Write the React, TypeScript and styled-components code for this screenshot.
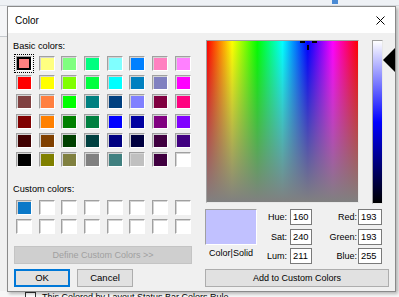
import React from 'react';
import styled, { createGlobalStyle } from 'styled-components';

const GlobalStyle = createGlobalStyle`
  html, body { margin: 0; padding: 0; }
  body {
    width: 399px;
    height: 297px;
    overflow: hidden;
    background: #f0f0f0;
    font-family: 'Liberation Sans', Arial, sans-serif;
  }
  * { box-sizing: border-box; }
`;

const BASIC = [
  '#ff8080', '#ffff80', '#80ff80', '#00ff80', '#80ffff', '#0080ff', '#ff80c0', '#ff80ff',
  '#ff0000', '#ffff00', '#80ff00', '#00ff40', '#00ffff', '#0080c0', '#8080c0', '#ff00ff',
  '#804040', '#ff8040', '#00ff00', '#008080', '#004080', '#8080ff', '#800040', '#ff0080',
  '#800000', '#ff8000', '#008000', '#008040', '#0000ff', '#0000a0', '#800080', '#8000ff',
  '#400000', '#804000', '#004000', '#004040', '#000080', '#000040', '#400040', '#400080',
  '#000000', '#808000', '#808040', '#808080', '#408080', '#c0c0c0', '#400040', '#ffffff',
];

const CUSTOM = ['#0a78c8', ...Array(15).fill('#ffffff')];

const HSL = { hue: 160, sat: 240, lum: 211 };
const RGB = { red: 193, green: 193, blue: 255 };

const SPECTRUM_W = 153;
const BAR_H = 164;

export default function App() {
  const crossX = (HSL.hue / 240) * (SPECTRUM_W - 2);
  const crossY = (1 - HSL.sat / 240) * 161;
  const arrowY = (1 - HSL.lum / 240) * BAR_H;

  return (
    <>
      <GlobalStyle />
      <Desktop>
        <BackTop>
          <BackIcon />
        </BackTop>
        <BackMiddle>
          <BackSide />
        </BackMiddle>
        <BackBottom>
          <CheckBox />
          <BackText>This Colored by Layout Status Bar Colors Rule</BackText>
        </BackBottom>

        <Dialog>
          <TitleBar>
            <Title>Color</Title>
            <CloseIcon width="9" height="9" viewBox="0 0 9 9">
              <path d="M0.5 0.5 L8.5 8.5 M8.5 0.5 L0.5 8.5" stroke="#000" strokeWidth="1" />
            </CloseIcon>
          </TitleBar>

          <Body>
            <LeftPane>
              <Label>Basic colors:</Label>
              <SwatchGrid>
                {BASIC.map((c, i) => (
                  <Swatch key={i} $color={c} $selected={i === 0} />
                ))}
              </SwatchGrid>

              <Label $top={16}>Custom colors:</Label>
              <SwatchGrid $custom>
                {CUSTOM.map((c, i) => (
                  <Swatch key={i} $color={c} />
                ))}
              </SwatchGrid>

              <DefineButton disabled>Define Custom Colors &gt;&gt;</DefineButton>
              <ButtonRow>
                <Button $default>OK</Button>
                <Button>Cancel</Button>
              </ButtonRow>
            </LeftPane>

            <RightPane>
              <PickerRow>
                <Spectrum>
                  <Cross
                    width="17"
                    height="10"
                    viewBox="0 0 17 10"
                    style={{ left: crossX - 8, top: crossY }}
                  >
                    <rect x="0" y="0" width="5" height="2" fill="#000" />
                    <rect x="12" y="0" width="5" height="2" fill="#000" />
                    <rect x="7" y="4" width="2" height="5" fill="#000" />
                  </Cross>
                </Spectrum>
                <LumWrap>
                  <LumBar />
                  <Arrow width="12" height="24" viewBox="0 0 12 24" style={{ top: arrowY - 12 }}>
                    <polygon points="0,12 12,0 12,24" fill="#000" />
                  </Arrow>
                </LumWrap>
              </PickerRow>

              <ValueRow>
                <PreviewCol>
                  <Preview />
                  <PreviewCaption>Color|Solid</PreviewCaption>
                </PreviewCol>
                <Fields>
                  <FieldLabel>Hue:</FieldLabel>
                  <Field>{HSL.hue}</Field>
                  <FieldLabel $wide>Red:</FieldLabel>
                  <Field $wide>{RGB.red}</Field>

                  <FieldLabel>Sat:</FieldLabel>
                  <Field>{HSL.sat}</Field>
                  <FieldLabel $wide>Green:</FieldLabel>
                  <Field $wide>{RGB.green}</Field>

                  <FieldLabel>Lum:</FieldLabel>
                  <Field>{HSL.lum}</Field>
                  <FieldLabel $wide>Blue:</FieldLabel>
                  <Field $wide>{RGB.blue}</Field>
                </Fields>
              </ValueRow>

              <AddButton>Add to Custom Colors</AddButton>
            </RightPane>
          </Body>
        </Dialog>
      </Desktop>
    </>
  );
}

const Desktop = styled.div`
  position: relative;
  width: 399px;
  height: 297px;
  display: flex;
  flex-direction: column;
  background: #f0f0f0;
`;

const BackTop = styled.div`
  position: relative;
  height: 6px;
  background: #eef1f5;
  border-bottom: 1px solid #d7dbe0;
`;

const BackIcon = styled.div`
  position: absolute;
  left: 332px;
  top: 0;
  width: 6px;
  height: 4px;
  background: #4a8ad4;
`;

const BackMiddle = styled.div`
  flex: 1;
  display: flex;
`;

const BackSide = styled.div`
  width: 8px;
  height: 31px;
  border-bottom: 1px solid #c5c9ce;
  background: #f4f5f7;
`;

const BackBottom = styled.div`
  height: 6px;
  display: flex;
  align-items: flex-start;
  padding-left: 25px;
  background: #f7f7f7;
  overflow: visible;
`;

const CheckBox = styled.div`
  width: 11px;
  height: 11px;
  flex: none;
  border: 1px solid #333;
  background: #fff;
  margin-top: 1px;
`;

const BackText = styled.span`
  margin-left: 6px;
  font-size: 9px;
  line-height: 12px;
  color: #000;
  white-space: nowrap;
`;

const Dialog = styled.div`
  position: absolute;
  left: 7px;
  top: 6px;
  width: 389px;
  height: 286px;
  background: #f0f0f0;
  border: 1px solid #8a8a8a;
  box-shadow: 2px 2px 3px rgba(0, 0, 0, 0.25);
  display: flex;
  flex-direction: column;
`;

const TitleBar = styled.div`
  height: 26px;
  flex: none;
  background: #fff;
  display: flex;
  align-items: center;
  justify-content: space-between;
  padding: 0 10px 0 7px;
`;

const Title = styled.span`
  font-size: 10px;
  color: #000;
`;

const CloseIcon = styled.svg`
  display: block;
`;

const Body = styled.div`
  flex: 1;
  display: flex;
`;

const LeftPane = styled.div`
  width: 190px;
  padding-left: 5px;
  display: flex;
  flex-direction: column;
`;

const Label = styled.div<{ $top?: number }>`
  margin-top: ${(p) => p.$top ?? 7}px;
  font-size: 9.2px;
  line-height: 12px;
  color: #000;
`;

const SwatchGrid = styled.div<{ $custom?: boolean }>`
  margin: ${(p) => (p.$custom ? '5px' : '4px')} 0 0 3px;
  display: grid;
  grid-template-columns: repeat(8, 16px);
  grid-auto-rows: 15px;
  column-gap: 6.67px;
  row-gap: ${(p) => (p.$custom ? '4px' : '4.2px')};
`;

const Swatch = styled.div<{ $color: string; $selected?: boolean }>`
  background: ${(p) => p.$color};
  border: 1px solid;
  border-color: #a0a0a0 #ffffff #ffffff #a0a0a0;
  box-shadow: ${(p) =>
    p.$selected ? 'inset 0 0 0 2px #000' : 'inset 1px 1px 0 #d4d4d4'};
  outline: ${(p) => (p.$selected ? '1px dotted #000' : 'none')};
  outline-offset: 1px;
`;

const DefineButton = styled.button`
  margin: 12px 0 0 1px;
  width: 178px;
  height: 18px;
  padding: 0;
  font-family: inherit;
  font-size: 9px;
  color: #a0a0a0;
  background: #cfcfcf;
  border: 1px solid #c4c4c4;
`;

const ButtonRow = styled.div`
  margin: 5px 0 0 1px;
  display: flex;
  gap: 7px;
`;

const Button = styled.button<{ $default?: boolean }>`
  width: 56px;
  height: 18px;
  padding: 0;
  font-family: inherit;
  font-size: 9.5px;
  color: #000;
  background: #e1e1e1;
  border: 1px solid ${(p) => (p.$default ? '#0078d7' : '#adadad')};
  box-shadow: ${(p) => (p.$default ? 'inset 0 0 0 1px #0078d7' : 'none')};
`;

const RightPane = styled.div`
  margin-left: 7px;
  display: flex;
  flex-direction: column;
`;

const PickerRow = styled.div`
  margin-top: 7px;
  display: flex;
  align-items: flex-start;
`;

const Spectrum = styled.div`
  position: relative;
  margin-left: 1px;
  width: ${SPECTRUM_W}px;
  height: 163px;
  border: 1px solid;
  border-color: #a0a0a0 #e8e8e8 #e8e8e8 #a0a0a0;
  background:
    linear-gradient(to bottom, rgba(128, 128, 128, 0), #808080),
    linear-gradient(
      to right,
      #ff0000 0%,
      #ffff00 16.67%,
      #00ff00 33.33%,
      #00ffff 50%,
      #0000ff 66.67%,
      #ff00ff 83.33%,
      #ff0000 100%
    );
  overflow: hidden;
`;

const Cross = styled.svg`
  position: absolute;
  display: block;
`;

const LumWrap = styled.div`
  position: relative;
  margin-left: 13px;
  width: 23px;
  height: ${BAR_H}px;
`;

const LumBar = styled.div`
  width: 11px;
  height: 100%;
  border: 1px solid;
  border-color: #a0a0a0 #e8e8e8 #e8e8e8 #a0a0a0;
  background: linear-gradient(to bottom, #ffffff, #0000ff 50%, #000000);
`;

const Arrow = styled.svg`
  position: absolute;
  left: 11px;
  display: block;
`;

const ValueRow = styled.div`
  margin-top: 5px;
  display: flex;
`;

const PreviewCol = styled.div`
  width: 52px;
  display: flex;
  flex-direction: column;
  align-items: center;
`;

const Preview = styled.div`
  width: 52px;
  height: 36px;
  background: rgb(193, 193, 255);
  border: 1px solid;
  border-color: #a0a0a0 #ffffff #ffffff #a0a0a0;
`;

const PreviewCaption = styled.div`
  margin-top: 2px;
  font-size: 9px;
  line-height: 12px;
  color: #000;
`;

const Fields = styled.div`
  display: grid;
  grid-template-columns: 33px 22px 46px 24px;
  grid-auto-rows: 16px;
  row-gap: 3.5px;
`;

const FieldLabel = styled.div<{ $wide?: boolean }>`
  text-align: right;
  padding-right: ${(p) => (p.$wide ? 1 : 3)}px;
  font-size: 9px;
  line-height: 16px;
  color: #000;
`;

const Field = styled.div<{ $wide?: boolean }>`
  background: #fff;
  border: 1px solid #7a7a7a;
  padding-left: 2px;
  font-size: 9.3px;
  line-height: 14px;
  color: #000;
`;

const AddButton = styled.button`
  margin-top: 5px;
  width: 184px;
  height: 18px;
  padding: 0;
  font-family: inherit;
  font-size: 9px;
  color: #000;
  background: #e1e1e1;
  border: 1px solid #adadad;
`;
